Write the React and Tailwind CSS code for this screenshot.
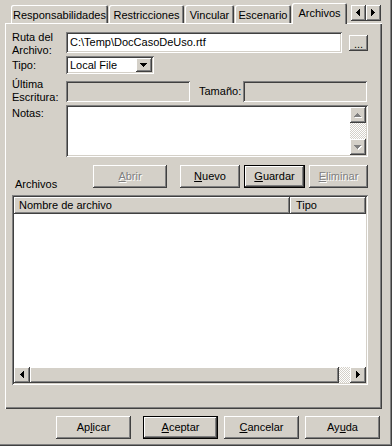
const RAISED =
  "shadow-[inset_-1px_-1px_0_#404040,inset_1px_1px_0_#ffffff,inset_-2px_-2px_0_#808080,inset_2px_2px_0_#d4d0c8]";
const SUNKEN =
  "shadow-[inset_1px_1px_0_#808080,inset_-1px_-1px_0_#ffffff,inset_2px_2px_0_#404040,inset_-2px_-2px_0_#d4d0c8]";
const CHECKER =
  "bg-[image:repeating-conic-gradient(#ffffff_0_25%,#d4d0c8_0_50%)] bg-[length:2px_2px]";
const TAB =
  "flex justify-center pt-[4px] bg-[#d4d0c8] rounded-t-[2px] shadow-[inset_1px_1px_0_#ffffff,inset_-1px_0_0_#404040,inset_-2px_0_0_#808080]";

const PATHS = {
  down: "M0 0h7v1h-1v1h-1v1h-1v1h-1v-1h-1v-1h-1v-1h-1z",
  up: "M3 0h1v1h1v1h1v1h1v1h-7v-1h1v-1h1v-1h1z",
  left: "M0 3h1v-1h1v-1h1v-1h1v7h-1v-1h-1v-1h-1v-1h-1z",
  right: "M0 0h1v1h1v1h1v1h1v1h-1v1h-1v1h-1v1h-1z",
};

function Arrow({ dir, disabled }) {
  const flat = dir === "up" || dir === "down";
  const w = flat ? 8 : 5;
  const h = flat ? 5 : 8;
  return (
    <svg width={w} height={h} viewBox={`0 0 ${w} ${h}`} shapeRendering="crispEdges">
      {disabled && <path d={PATHS[dir]} fill="#ffffff" transform="translate(1 1)" />}
      <path d={PATHS[dir]} fill={disabled ? "#808080" : "#000000"} />
    </svg>
  );
}

function Button({ children, className = "", def, disabled }) {
  return (
    <div
      className={`flex items-center justify-center shrink-0 bg-[#d4d0c8] ${RAISED} ${
        def ? "border border-black" : ""
      } ${disabled ? "text-[#808080] [text-shadow:1px_1px_0_#ffffff]" : ""} ${className}`}
    >
      {children}
    </div>
  );
}

function ScrollBtn({ dir, disabled, className = "" }) {
  return (
    <div className={`flex items-center justify-center bg-[#d4d0c8] ${RAISED} ${className}`}>
      <Arrow dir={dir} disabled={disabled} />
    </div>
  );
}

export default function App() {
  return (
    <div className="w-[392px] h-[446px] bg-[#d4d0c8] flex flex-col overflow-hidden text-black text-[11px] leading-[13px] font-['Liberation_Sans',Arial,sans-serif] shadow-[inset_-1px_-1px_0_#404040,inset_-2px_-2px_0_#808080]">
      {/* tabs */}
      <div className="relative z-10 mt-[3px] h-[20px] flex items-end pl-[11px]">
        <div className={`${TAB} w-[97px] h-[18px]`}>Responsabilidades</div>
        <div className={`${TAB} ml-[1px] w-[75px] h-[18px]`}>Restricciones</div>
        <div className={`${TAB} ml-[1px] w-[49px] h-[18px]`}>Vincular</div>
        <div className={`${TAB} ml-[1px] w-[56px] h-[18px]`}>Escenario</div>
        <div className={`${TAB} ml-[1px] w-[55px] h-[21px] mb-[-1px]`}>Archivos</div>
        <div className="ml-[4px] self-start mt-[2px] flex">
          <ScrollBtn dir="left" className="w-[15px] h-[16px]" />
          <ScrollBtn dir="right" className="w-[15px] h-[16px]" />
        </div>
      </div>

      {/* page */}
      <div className="ml-[5px] w-[377px] h-[386px] shrink-0 flex flex-col pl-[7px] pt-[9px] shadow-[inset_1px_1px_0_#ffffff,inset_-1px_-1px_0_#404040,inset_-2px_-2px_0_#808080]">
        <div className="flex items-start h-[21px]">
          <div className="w-[54px] -mt-[1px]">
            <div>Ruta del</div>
            <div>Archivo:</div>
          </div>
          <div className={`w-[276px] h-[21px] bg-white ${SUNKEN} flex items-center pl-[4px] pb-[1px]`}>
            C:\Temp\DocCasoDeUso.rtf
          </div>
          <Button className="ml-[7px] mt-[3px] w-[19px] h-[16px] pt-[2px]">...</Button>
        </div>

        <div className="mt-[3px] flex items-center h-[18px]">
          <div className="w-[54px]">Tipo:</div>
          <div className={`w-[88px] h-[18px] bg-white ${SUNKEN} flex items-center pl-[4px] pr-[2px]`}>
            <span className="flex-1">Local File</span>
            <ScrollBtn dir="down" className="w-[16px] h-[14px]" />
          </div>
        </div>

        <div className="mt-[7px] flex items-start h-[21px]">
          <div className="w-[54px] -mt-[3px]">
            <div>Última</div>
            <div>Escritura:</div>
          </div>
          <div className={`w-[124px] h-[21px] ${SUNKEN}`} />
          <div className="ml-[9px] w-[44px] self-center">Tamaño:</div>
          <div className={`w-[124px] h-[21px] ${SUNKEN}`} />
        </div>

        <div className="mt-[3px] flex items-start">
          <div className="w-[54px] mt-[2px]">Notas:</div>
          <div className={`w-[302px] h-[52px] bg-white ${SUNKEN} flex justify-end p-[2px]`}>
            <div className="w-[16px] flex flex-col">
              <ScrollBtn dir="up" disabled className="h-[16px]" />
              <div className={`flex-1 ${CHECKER}`} />
              <ScrollBtn dir="down" disabled className="h-[16px]" />
            </div>
          </div>
        </div>

        <div className="mt-[8px] flex items-end h-[23px]">
          <div className="w-[81px] pl-[3px] mb-[-3px]">Archivos</div>
          <Button disabled className="w-[74px] h-[23px]">
            <span><u>A</u>brir</span>
          </Button>
          <Button className="ml-[13px] w-[60px] h-[23px]">
            <span><u>N</u>uevo</span>
          </Button>
          <Button def className="ml-[4px] w-[61px] h-[23px]">
            <span><u>G</u>uardar</span>
          </Button>
          <Button disabled className="ml-[4px] w-[59px] h-[23px]">
            <span><u>E</u>liminar</span>
          </Button>
        </div>

        <div className={`mt-[7px] w-[356px] h-[190px] bg-white ${SUNKEN} p-[2px] flex flex-col`}>
          <div className="flex h-[17px]">
            <div className={`w-[276px] bg-[#d4d0c8] ${RAISED} pl-[5px] flex items-center`}>Nombre de archivo</div>
            <div className={`w-[76px] bg-[#d4d0c8] ${RAISED} pl-[6px] flex items-center`}>Tipo</div>
          </div>
          <div className="flex-1 bg-white" />
          <div className="flex h-[16px]">
            <ScrollBtn dir="left" className="w-[16px]" />
            <div className={`w-[309px] bg-[#d4d0c8] ${RAISED}`} />
            <div className={`flex-1 ${CHECKER}`} />
            <ScrollBtn dir="right" className="w-[16px]" />
          </div>
        </div>
      </div>

      {/* dialog buttons */}
      <div className="mt-[7px] flex h-[23px] pl-[56px]">
        <Button className="w-[75px] h-[23px]">
          <span>Ap<u>l</u>icar</span>
        </Button>
        <Button def className="ml-[12px] w-[75px] h-[23px]">
          <span><u>A</u>ceptar</span>
        </Button>
        <Button className="ml-[6px] w-[75px] h-[23px]">
          <span><u>C</u>ancelar</span>
        </Button>
        <Button className="ml-[6px] w-[75px] h-[23px]">
          <span>Ay<u>u</u>da</span>
        </Button>
      </div>
    </div>
  );
}
